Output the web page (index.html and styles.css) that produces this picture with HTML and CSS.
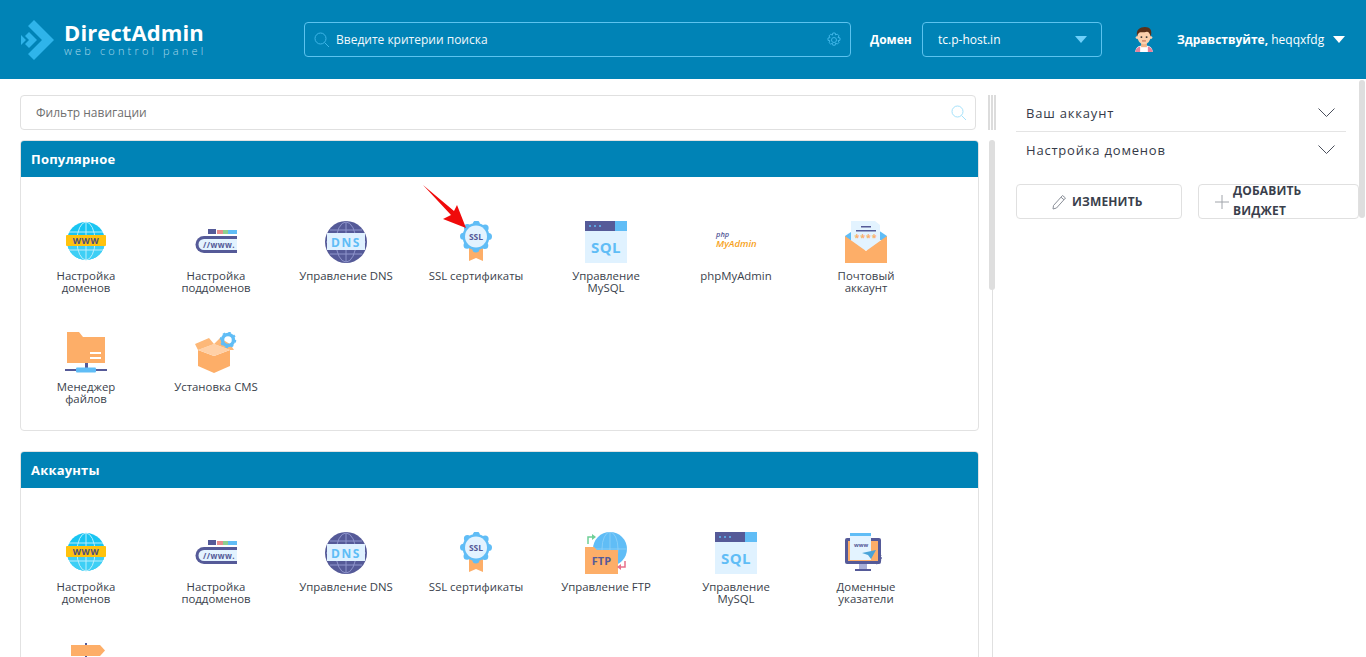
FILE: index.html
```html
<!DOCTYPE html>
<html lang="ru">
<head>
<meta charset="utf-8">
<title>DirectAdmin</title>
<link rel="stylesheet" href="styles.css">
</head>
<body>
<svg class="defs" width="0" height="0">
  <defs>
    <symbol id="i-www" viewBox="0 1 42 42">
      <circle cx="21" cy="21" r="19" fill="#19c5f2"/>
      <path d="M2 21a19 19 0 0 0 38 0z" fill="#3ecff5"/>
      <g fill="none" stroke="#b9eefc" stroke-width="1"><ellipse cx="21" cy="21" rx="9" ry="19"/><path d="M21 2v38M4 12h34M4 30h34"/></g>
      <rect x="1" y="15" width="40" height="11" rx="1" fill="#ffc20e"/>
      <text x="21" y="24" class="ic-t" font-size="8.5" fill="#4b4f7c" text-anchor="middle" letter-spacing="0.6">WWW</text>
    </symbol>
    <symbol id="i-sub" viewBox="0 0 42 42">
      <rect x="13" y="8" width="8" height="5" fill="#555a98"/><rect x="22" y="9" width="6" height="4" fill="#e88d8d"/><rect x="28" y="9" width="5" height="4" fill="#8ed08f"/><rect x="33" y="9" width="9" height="4" fill="#60bdf6"/>
      <path d="M42 15H9a8.500 8.500 0 0 0 0 17h33z" fill="#555a98"/>
      <path d="M42 18H9a5.500 5.500 0 0 0 0 11h33z" fill="#e3f3ff"/>
      <text x="8" y="27" class="ic-t" font-size="8" fill="#555a98" letter-spacing="0.4">//www.</text>
    </symbol>
    <symbol id="i-dns" viewBox="0 0 42 42">
      <circle cx="21" cy="21" r="21" fill="#555a98"/>
      <g fill="none" stroke="#8f95cc" stroke-width="1"><ellipse cx="21" cy="21" rx="10" ry="20"/><path d="M21 1v40M5 9h32M5 33h32M1 21h40"/></g>
      <rect x="2" y="12" width="38" height="17" fill="#dff1ff"/>
      <text x="21" y="26" class="ic-t" font-size="12" fill="#60bdf6" text-anchor="middle" letter-spacing="1.600">DNS</text>
    </symbol>
    <symbol id="i-ssl" viewBox="0 0 42 42">
      <path d="M14 26h14v14l-7-3-7 3z" fill="#fdae68"/>
      <circle cx="21" cy="15.500" r="13.500" fill="#60bdf6"/>
      <circle cx="21" cy="15.500" r="12.500" fill="none" stroke="#60bdf6" stroke-width="7" stroke-linecap="round" stroke-dasharray="0 9.817"/>
      <circle cx="21" cy="15.500" r="11" fill="#e3f3ff"/>
      <text x="21" y="18.500" class="ic-t" font-size="8.500" fill="#555a98" text-anchor="middle">SSL</text>
    </symbol>
    <symbol id="i-sql" viewBox="0 0 42 42">
      <rect width="42" height="42" fill="#e0f2ff"/>
      <rect width="30" height="10" fill="#555a98"/><rect x="30" width="12" height="10" fill="#60bdf6"/>
      <g fill="#60bdf6"><circle cx="5" cy="5" r="1"/><circle cx="10" cy="5" r="1"/><circle cx="15" cy="5" r="1"/></g>
      <text x="21" y="32" class="ic-t" font-size="15" fill="#60bdf6" text-anchor="middle" letter-spacing="0.500">SQL</text>
    </symbol>
    <symbol id="i-pma" viewBox="0 0 42 42">
      <text x="1" y="16" class="ic-i" font-size="7.500" fill="#555a98">php</text>
      <text x="1" y="26" class="ic-i" font-size="9.500" fill="#f7a21b">MyAdmin</text>
    </symbol>
    <symbol id="i-mail" viewBox="0 0 42 42">
      <path d="M0 15L21 1l21 14v4H0z" fill="#60bdf6"/>
      <path d="M6 0h24l5 4v25H6z" fill="#e3f3ff"/>
      <path d="M16 5h10v1.500H16zM11 9h20v1.500H11z" fill="#555a98"/>
      <text x="21" y="20" class="ic-t" font-size="9" fill="#fdae68" text-anchor="middle" letter-spacing="0.800">****</text>
      <path d="M0 15l21 15 21-15v27H0z" fill="#fdae68"/>
    </symbol>
    <symbol id="i-files" viewBox="0 0 42 42">
      <path d="M2 0h12l4 5h22v26H2z" fill="#fdae68"/>
      <path d="M25 20h11v2H25zM25 25h11v2H25z" fill="#fff"/>
      <rect x="20" y="31" width="3" height="6" fill="#555a98"/>
      <rect x="0" y="37" width="42" height="2" fill="#555a98"/>
      <rect x="11" y="35.500" width="20" height="5" rx="1" fill="#60bdf6"/>
    </symbol>
    <symbol id="i-cms" viewBox="0 0 42 42">
      <path d="M3 18l16 6v17L3 34z" fill="#fdae68"/>
      <path d="M35 18l-16 6v17l16-7z" fill="#fdae68"/>
      <path d="M3 18l16-6 16 6-16 6z" fill="#ffd0a6"/>
      <path d="M3 18l-3-6 14-6 5 6zM35 18l-16-6 6-6 10 6 4 6z" fill="#fdb878"/>
      <circle cx="33" cy="8" r="5.500" fill="none" stroke="#60bdf6" stroke-width="3.500"/>
      <circle cx="33" cy="8" r="7.500" fill="none" stroke="#60bdf6" stroke-width="1.500" stroke-dasharray="2.500 3.400"/>
    </symbol>
    <symbol id="i-ftp" viewBox="0 0 42 42">
      <circle cx="25" cy="17" r="17" fill="#60bdf6"/>
      <g fill="none" stroke="#8fd0f8" stroke-width="0.800"><ellipse cx="25" cy="17" rx="8" ry="17"/><path d="M8 17h34M25 0v34"/></g>
      <path d="M0 15h9l3 3h21v24H0z" fill="#fdae68"/>
      <text x="16.500" y="33" class="ic-t" font-size="11" fill="#555a98" text-anchor="middle">FTP</text>
      <path d="M3 12V5h5" fill="none" stroke="#6fcf97" stroke-width="1.500"/><path d="M7 2l4 3-4 3z" fill="#6fcf97"/>
      <path d="M40 29v6h-5" fill="none" stroke="#e8708a" stroke-width="1.500"/><path d="M36 32l-4 3 4 3z" fill="#e8708a"/>
    </symbol>
    <symbol id="i-ptr" viewBox="0 0 42 42">
      <rect x="0" y="6" width="36" height="26" rx="2" fill="#555a98"/>
      <rect x="3" y="9" width="30" height="20" fill="#fdae68"/>
      <rect x="14" y="32" width="8" height="5" fill="#a9b0d8"/><rect x="10" y="37" width="16" height="2" fill="#555a98"/>
      <rect x="5" y="1" width="21" height="27" fill="#e3f3ff"/><rect x="5" y="1" width="21" height="3" fill="#60bdf6"/>
      <text x="9" y="15" class="ic-t" font-size="5.500" fill="#555a98">www</text>
      <path d="M17 21l14-3-5 9-3-4z" fill="#4aa3d8"/>
      <path d="M35 22a6 6 0 0 1 1 6 6 6 0 0 1-6 4" fill="none" stroke="#555a98" stroke-width="1" stroke-dasharray="2 1.500"/>
    </symbol>
    <symbol id="i-sign" viewBox="0 0 42 42">
      <rect x="20" y="0" width="2" height="42" fill="#555a98"/>
      <path d="M6 2h29l5 5.500-5 5.500H6z" fill="#fdae68"/>
    </symbol>
  </defs>
</svg>

<header class="top">
  <div class="logo">
    <svg class="logo-mark" width="36" height="42" viewBox="0 0 36 42"><path d="M14 1l20 20-20 20-6-6 14-14L8 7z" fill="#2fb4ea"/><path d="M1 16l5 5-5 5zM9 13l8 8-8 8-4-4 4-4-4-4z" fill="#2fb4ea"/></svg>
    <div class="logo-text">
      <div class="logo-name">DirectAdmin</div>
      <div class="logo-sub">web control panel</div>
    </div>
  </div>
  <div class="search">
    <svg class="s-ic" width="16" height="16" viewBox="0 0 16 16" fill="none" stroke="#3fb6e8"><circle cx="6.500" cy="6.500" r="5.500"/><path d="M10.500 10.500l4.500 4.500"/></svg>
    <span class="search-ph">Введите критерии поиска</span>
    <svg class="gear" width="16" height="16" viewBox="0 0 16 16" fill="none" stroke="#3fb6e8"><circle cx="8" cy="8" r="2.500"/><path d="M6.800 1h2.400l.4 2 1.700-.9 1.700 1.700-1 1.700 2 .4v2.400l-2 .4 1 1.700-1.700 1.700-1.700-1-.4 2.100H6.800l-.4-2-1.700.9L3 10.500l1-1.700-2-.4V6l2-.4-1-1.700L4.700 2.200l1.700 1z"/></svg>
  </div>
  <span class="dom-label">Домен</span>
  <div class="dom-select"><span>tc.p-host.in</span><i class="caret caret-blue"></i></div>
  <svg class="avatar" width="24" height="25" viewBox="0 0 24 26">
    <path d="M3 26c0-5 4-7 9-7s9 2 9 7z" fill="#fff"/><path d="M3 26c0-3 2-5 5-6v6zM21 26c0-3-2-5-5-6v6z" fill="#e8819a"/>
    <rect x="9" y="15" width="6" height="6" fill="#f2b48c"/>
    <ellipse cx="12" cy="10" rx="7" ry="8" fill="#fbd0ad"/>
    <circle cx="4.800" cy="11" r="1.500" fill="#fbd0ad"/><circle cx="19.200" cy="11" r="1.500" fill="#fbd0ad"/>
    <path d="M5 10C3 3 8 0 13 0c5 0 8 3 6 10-1-3-2-5-4-5-3 1-7 0-8 1-1 1-2 2-2 4z" fill="#5a3019"/>
    <circle cx="9.300" cy="10.500" r="1" fill="#333"/><circle cx="14.700" cy="10.500" r="1" fill="#333"/>
    <path d="M10 14.500h4" stroke="#c0604a"/>
  </svg>
  <div class="user"><b>Здравствуйте,</b> heqqxfdg</div>
  <i class="caret caret-white"></i>
</header>

<div class="page">
  <main class="left">
    <div class="filter">
      <span>Фильтр навигации</span>
      <svg width="16" height="16" viewBox="0 0 16 16" fill="none" stroke="#a5e2fb"><circle cx="6.500" cy="6.500" r="5.500"/><path d="M10.500 10.500l4.500 4.500"/></svg>
    </div>

    <section class="card">
      <h2 class="card-h">Популярное</h2>
      <div class="grid">
        <a class="item"><svg class="ico"><use href="#i-www"/></svg><span>Настройка доменов</span></a>
        <a class="item"><svg class="ico"><use href="#i-sub"/></svg><span>Настройка поддоменов</span></a>
        <a class="item"><svg class="ico"><use href="#i-dns"/></svg><span>Управление DNS</span></a>
        <a class="item"><svg class="ico"><use href="#i-ssl"/></svg><span>SSL сертификаты</span>
          <svg class="arrow" width="44" height="44" viewBox="0 0 44 44"><path d="M0 0l31 26 3-6 9 23-23-9 8-4z" fill="#f00a0a"/></svg>
        </a>
        <a class="item"><svg class="ico"><use href="#i-sql"/></svg><span>Управление MySQL</span></a>
        <a class="item"><svg class="ico"><use href="#i-pma"/></svg><span>phpMyAdmin</span></a>
        <a class="item"><svg class="ico"><use href="#i-mail"/></svg><span>Почтовый аккаунт</span></a>
        <a class="item"><svg class="ico"><use href="#i-files"/></svg><span>Менеджер файлов</span></a>
        <a class="item"><svg class="ico"><use href="#i-cms"/></svg><span>Установка CMS</span></a>
      </div>
    </section>

    <section class="card">
      <h2 class="card-h">Аккаунты</h2>
      <div class="grid">
        <a class="item"><svg class="ico"><use href="#i-www"/></svg><span>Настройка доменов</span></a>
        <a class="item"><svg class="ico"><use href="#i-sub"/></svg><span>Настройка поддоменов</span></a>
        <a class="item"><svg class="ico"><use href="#i-dns"/></svg><span>Управление DNS</span></a>
        <a class="item"><svg class="ico"><use href="#i-ssl"/></svg><span>SSL сертификаты</span></a>
        <a class="item"><svg class="ico"><use href="#i-ftp"/></svg><span>Управление FTP</span></a>
        <a class="item"><svg class="ico"><use href="#i-sql"/></svg><span>Управление MySQL</span></a>
        <a class="item"><svg class="ico"><use href="#i-ptr"/></svg><span>Доменные указатели</span></a>
        <a class="item"><svg class="ico"><use href="#i-sign"/></svg></a>
      </div>
    </section>
  </main>

  <div class="split">
    <div class="grip"></div>
    <div class="split-track"><div class="split-thumb"></div></div>
  </div>

  <aside class="right">
    <div class="acc"><span>Ваш аккаунт</span><svg width="17" height="10" viewBox="0 0 17 10" fill="none" stroke="#4a4f5c"><path d="M.5.500l8 8 8-8"/></svg></div>
    <div class="acc acc-last"><span>Настройка доменов</span><svg width="17" height="10" viewBox="0 0 17 10" fill="none" stroke="#4a4f5c"><path d="M.5.500l8 8 8-8"/></svg></div>
    <div class="btns">
      <div class="btn btn-edit">
        <svg width="15" height="16" viewBox="0 0 15 16" fill="none" stroke="#8a8f98"><path d="M1.500 11.500L10.500 1.500l3 2.500-9 10-3.500 1z"/><path d="M9 3.200l3 2.600"/></svg>
        <span>ИЗМЕНИТЬ</span>
      </div>
      <div class="btn btn-add">
        <svg width="14" height="14" viewBox="0 0 14 14" stroke="#a0a4aa"><path d="M7 0v14M0 7h14"/></svg>
        <span>ДОБАВИТЬ ВИДЖЕТ</span>
      </div>
    </div>
  </aside>
  <div class="page-thumb"></div>
</div>
</body>
</html>
```

FILE: styles.css
```css
* { box-sizing: border-box; }
html, body { margin: 0; height: 100%; overflow: hidden; }
body { font-family: "Open Sans", "Noto Sans", sans-serif; background: #fff; color: #3a3f4c; }
.defs { position: absolute; }
.ic-t { font-family: "Open Sans", sans-serif; font-weight: 700; }
.ic-i { font-family: "Open Sans", sans-serif; font-weight: 600; font-style: italic; }

.top { height: 79px; background: #0083b6; display: flex; align-items: center; color: #fff; font-size: 12px; padding-left: 20px; }
.logo { display: flex; align-items: center; width: 284px; }
.logo-mark { flex: none; margin-right: 8px; }
.logo-name { font-size: 22px; line-height: 24px; font-weight: 700; letter-spacing: .1px; margin-top: -3px; }
.logo-sub { font-size: 11px; line-height: 12px; letter-spacing: 3.15px; color: #a8d8ea; font-weight: 300; margin-top: 1px; white-space: nowrap; }
.search { width: 547px; height: 35px; border: 1px solid #5cc3ef; border-radius: 4px; display: flex; align-items: center; padding: 0 8px; }
.s-ic { margin-right: 6px; margin-left: 1px; flex: none; }
.search-ph { flex: 1; color: #f0f8fc; }
.dom-label { font-weight: 700; margin-left: 19px; width: 52px; }
.dom-select { width: 180px; height: 35px; border: 1px solid #5cc3ef; border-radius: 4px; display: flex; align-items: center; justify-content: space-between; padding: 0 14px 0 15px; }
.avatar { margin-left: 30px; flex: none; }
.user { margin-left: 21px; white-space: nowrap; }
.user b { font-weight: 700; }
.caret { width: 0; height: 0; border-left: 6.500px solid transparent; border-right: 6.500px solid transparent; display: block; }
.caret-blue { border-top: 7px solid #6fd0fa; }
.caret-white { border-top: 7px solid #fff; margin-left: 9px; }

.page { display: flex; position: relative; height: 578px; overflow: hidden; }
.left { width: 988px; flex: none; padding: 16px 9px 0 20px; }
.filter { height: 35px; width: 956px; border: 1px solid #e0e0e0; border-radius: 4px; display: flex; align-items: center; justify-content: space-between; padding: 0 8px 0 15px; font-size: 12px; color: #6f6f6f; }
.card { margin-top: 10px; border: 1px solid #e2e2e2; border-radius: 4px; height: 291px; }
.card + .card { margin-top: 20px; height: auto; }
.card-h { margin: 0; height: 36px; background: #0083b6; color: #fff; font-size: 13px; font-weight: 700; letter-spacing: .2px; line-height: 36px; padding-left: 10px; border-radius: 3px 3px 0 0; }
.grid { display: grid; grid-template-columns: repeat(7, 130px); grid-auto-rows: 100px; row-gap: 11px; padding-top: 44px; }
.item { display: flex; flex-direction: column; align-items: center; text-align: center; font-size: 11.4px; line-height: 12px; color: #3a3f4c; position: relative; padding: 0 15px; }
.ico { width: 42px; height: 42px; flex: none; margin-bottom: 7px; }
.arrow { position: absolute; left: 12px; top: -36px; }

.split { width: 10px; flex: none; padding-top: 16px; }
.grip { height: 35px; width: 8px; border-left: 2px solid #dcdcdc; border-right: 2px solid #dcdcdc; background: linear-gradient(#dcdcdc, #dcdcdc) center / 2px 100% no-repeat; }
.split-track { margin-top: 10px; height: 520px; position: relative; }
.split-track::before { content: ""; position: absolute; left: 4px; top: 0; bottom: 0; width: 1px; background: #e0e0e0; }
.split-thumb { position: relative; width: 6px; height: 150px; margin-left: 1px; background: #dedede; border-radius: 3px; }

.right { width: 330px; flex: none; margin-left: 18px; padding-top: 16px; }
.acc { height: 37px; display: flex; align-items: center; justify-content: space-between; padding: 0 11px 0 10px; font-size: 13px; letter-spacing: .8px; font-weight: 500; color: #353a48; border-bottom: 1px solid #e4e4e4; }
.acc-last { border-bottom: 0; height: 35px; }
.btns { display: flex; gap: 16px; margin-top: 17px; width: 343px; }
.btn { flex: none; height: 35px; border: 1px solid #e0e0e0; border-radius: 4px; display: flex; align-items: center; font-size: 12px; font-weight: 700; letter-spacing: .15px; color: #3a3f4c; }
.btn-edit { width: 166px; justify-content: flex-start; padding-left: 35px; gap: 5px; }
.btn-add { width: 161px; padding-left: 16px; gap: 4px; line-height: 20px; }
.btn-add span { width: 70px; padding-bottom: 2px; }
.page-thumb { position: absolute; right: 1px; top: 1px; width: 6px; height: 138px; background: #dedede; border-radius: 3px; }
```
